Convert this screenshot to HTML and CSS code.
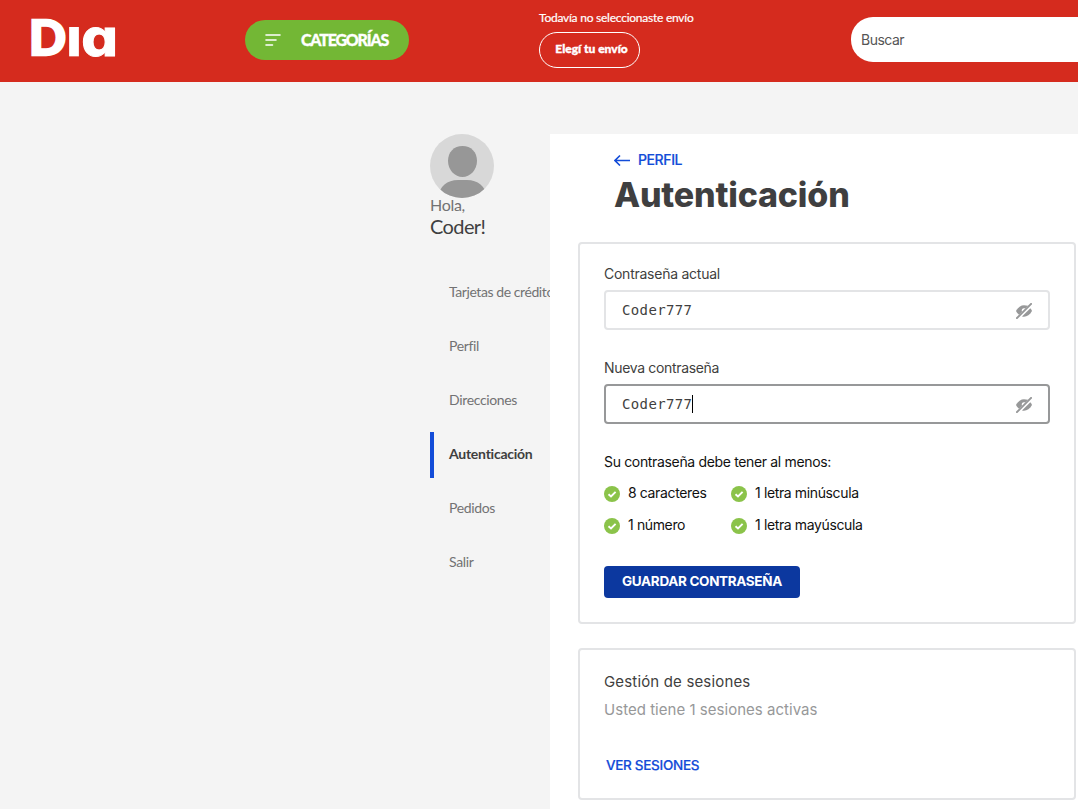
FILE: index.html
```html
<!DOCTYPE html>
<html lang="es">
<head>
<meta charset="utf-8">
<title>Autenticación - Dia</title>
<link rel="stylesheet" href="styles.css">
</head>
<body>
<header class="header">
  <svg class="logo" width="84" height="40" viewBox="0 0 84 40" role="img" aria-label="Dia">
    <text class="logo-text logo-d" font-size="47" x="-3" y="36" textLength="37" lengthAdjust="spacingAndGlyphs">D</text>
    <text class="logo-text logo-i" font-size="53" x="32.500" y="37" textLength="19" lengthAdjust="spacingAndGlyphs">ı</text>
    <text class="logo-text logo-a" font-size="52" x="49" y="36.500" textLength="38" lengthAdjust="spacingAndGlyphs">ɑ</text>
  </svg>
  <button class="categories">
    <svg width="17" height="14" viewBox="0 0 17 14" fill="none" stroke="#fff" stroke-width="1.6" stroke-linecap="round"><path d="M2 2H16M2 7H12M2 12H8.500"/></svg>
    <span class="cat-label">CATEGORÍAS</span>
  </button>
  <div class="shipping">
    <span class="ship-note">Todavía no seleccionaste envío</span>
    <button class="ship-button">Elegí tu envío</button>
  </div>
  <div class="search">Buscar</div>
</header>
<main class="page">
  <aside class="sidebar">
    <svg class="avatar" width="64" height="64" viewBox="0 0 64 64"><defs><clipPath id="c"><circle cx="32" cy="32" r="32"/></clipPath></defs><g clip-path="url(#c)"><path fill="#d8d8d8" d="M0 0h64v64H0z"/><g fill="#979797"><path d="M32.500 12C41 12 47 18 47 27S40 43 32.500 43 18 36 18 27 24 12 32.500 12Z"/><path d="M7 64C10 52 17 46 28 46H37C48 46 55 52 58 64Z"/></g></g></svg>
    <div class="hello">Hola,</div>
    <div class="name">Coder!</div>
    <nav class="menu">
      <a class="item item-cards">Tarjetas de crédito</a>
      <a class="item">Perfil</a>
      <a class="item">Direcciones</a>
      <a class="item active">Autenticación</a>
      <a class="item">Pedidos</a>
      <a class="item">Salir</a>
    </nav>
  </aside>
  <section class="content">
    <a class="back"><svg width="17" height="12" viewBox="0 0 17 12" fill="none" stroke="#134cd8" stroke-width="1.600"><path d="M1 6.500H16M6 1.500L1 6.500L6 11.500"/></svg><span class="back-label">PERFIL</span></a>
    <h1 class="title">Autenticación</h1>
    <div class="card password">
      <div class="label">Contraseña actual</div>
      <div class="field"><span class="value">Coder777</span><svg class="eye" width="16" height="16" viewBox="0 0 16 16"><g fill="#979899"><path d="M0 8C2 4 5 2.200 8 2.200Q10 2.200 12 2.800L9.200 5.600C7 4.500 5 6.500 6 8.800L3 11.800Q1 10 0 8Z"/><path d="M14.300 5.300Q15.500 6.500 16 8C14 12 11 13.700 8 13.700Q7 13.700 6 13.500Z"/></g><path d="M.9 15.100L15.100.9" stroke="#979899" stroke-width="2" stroke-linecap="round"/></svg></div>
      <div class="label second">Nueva contraseña</div>
      <div class="field focus"><span class="value">Coder777</span><i class="caret"></i><svg class="eye" width="16" height="16" viewBox="0 0 16 16"><g fill="#979899"><path d="M0 8C2 4 5 2.200 8 2.200Q10 2.200 12 2.800L9.200 5.600C7 4.500 5 6.500 6 8.800L3 11.800Q1 10 0 8Z"/><path d="M14.300 5.300Q15.500 6.500 16 8C14 12 11 13.700 8 13.700Q7 13.700 6 13.500Z"/></g><path d="M.9 15.100L15.100.9" stroke="#979899" stroke-width="2" stroke-linecap="round"/></svg></div>
      <div class="rules-title">Su contraseña debe tener al menos:</div>
      <div class="rules">
        <div class="rule"><svg class="check" width="16" height="16" viewBox="0 0 16 16"><circle cx="8" cy="8" r="8" fill="#8bc34a"/><path d="M4.500 8.200L7 10.500L11.600 5.800" fill="none" stroke="#fff" stroke-width="1.900"/></svg><span>8 caracteres</span></div>
        <div class="rule"><svg class="check" width="16" height="16" viewBox="0 0 16 16"><circle cx="8" cy="8" r="8" fill="#8bc34a"/><path d="M4.500 8.200L7 10.500L11.600 5.800" fill="none" stroke="#fff" stroke-width="1.900"/></svg><span>1 letra minúscula</span></div>
        <div class="rule"><svg class="check" width="16" height="16" viewBox="0 0 16 16"><circle cx="8" cy="8" r="8" fill="#8bc34a"/><path d="M4.500 8.200L7 10.500L11.600 5.800" fill="none" stroke="#fff" stroke-width="1.900"/></svg><span>1 número</span></div>
        <div class="rule"><svg class="check" width="16" height="16" viewBox="0 0 16 16"><circle cx="8" cy="8" r="8" fill="#8bc34a"/><path d="M4.500 8.200L7 10.500L11.600 5.800" fill="none" stroke="#fff" stroke-width="1.900"/></svg><span>1 letra mayúscula</span></div>
      </div>
      <button class="save">GUARDAR CONTRASEÑA</button>
    </div>
    <div class="card sessions">
      <div class="sessions-title">Gestión de sesiones</div>
      <div class="sessions-info">Usted tiene 1 sesiones activas</div>
      <a class="sessions-link">VER SESIONES</a>
    </div>
  </section>
</main>
</body>
</html>
```
FILE: styles.css
```css
* { box-sizing: border-box; }
body { margin: 0; height: 809px; overflow: hidden; background: #f4f4f4; color: #3f3f40; font-family: Inter, "Liberation Sans", sans-serif; font-size: 14px; white-space: nowrap; }
button { border: 0; padding: 0; font: inherit; color: #fff; white-space: nowrap; }
svg { flex: none; display: block; }
.header { height: 82px; background: #d52b1e; display: flex; align-items: flex-start; color: #fff; overflow: hidden; }
.logo { margin: 19px 0 0 32px; overflow: visible; }
.logo-text { font-family: "DejaVu Sans", sans-serif; font-weight: 700; fill: #fff; stroke: #fff; }
.logo-d { font-family: Lato, sans-serif; font-weight: 900; stroke-width: 2.4px; }
.logo-i { stroke-width: 0; }
.logo-a { stroke-width: 1px; }
.categories { margin: 20px 0 0 129px; width: 164px; height: 40px; border-radius: 20px; background: #73b735; display: flex; align-items: center; padding-left: 19px; gap: 20px; flex: none; font-family: Lato, sans-serif; font-weight: 900; font-size: 16px; letter-spacing: -1.2px; -webkit-text-stroke: .3px #fff; }
.cat-label { padding-bottom: 2px; }
.shipping { width: 312px; margin-left: 130px; padding-top: 10px; flex: none; font-family: Lato, sans-serif; }
.ship-note { display: block; height: 22px; line-height: 16px; font-size: 12px; letter-spacing: -.24px; -webkit-text-stroke: .2px #fff; }
.ship-button { display: block; width: 101px; height: 36px; border: 1px solid #fff; border-radius: 18px; background: transparent; font-size: 12px; font-weight: 900; padding: 0 3px 3px 7px; -webkit-text-stroke: .4px #fff; }
.search { flex: none; width: 260px; height: 45px; margin-top: 17px; border-radius: 22px 0 0 22px; background: #fff; color: #555; padding-left: 10px; line-height: 46px; font-size: 14px; letter-spacing: -.5px; }
.page { display: flex; padding: 52px 0 0 430px; }
.sidebar { width: 120px; overflow: hidden; flex: none; font-family: Lato, sans-serif; color: #727273; }
.hello { font-size: 16px; line-height: 14px; height: 18px; letter-spacing: -.3px; }
.name { font-size: 20px; line-height: 20px; height: 22px; color: #3f3f40; letter-spacing: -.6px; }
.menu { display: flex; flex-direction: column; gap: 8px; margin-top: 32px; }
.item { display: block; height: 46px; line-height: 44px; padding-left: 15px; border-left: 4px solid transparent; font-size: 14px; letter-spacing: -.35px; }
.item-cards { letter-spacing: -.42px; }
.active { color: #3f3f40; font-weight: 700; border-color: #134cd8; letter-spacing: -.25px; }
.content { width: 528px; height: 675px; background: #fff; padding: 16px 2px 0 28px; }
.back { height: 20px; margin-left: 36px; display: flex; align-items: center; gap: 8px; color: #134cd8; font-size: 14px; font-weight: 500; }
.back-label { padding-bottom: 2px; letter-spacing: -.4px; margin-left: -1px; -webkit-text-stroke: .2px; }
.title { margin: 0 0 0 36px; height: 72px; line-height: 50px; font-size: 34px; font-weight: 800; color: #3f3f40; letter-spacing: -.2px; }
.card { width: 498px; border: 2px solid #e3e4e6; border-radius: 4px; padding: 20px 24px 0; background: #fff; }
.password { height: 382px; }
.label { height: 26px; line-height: 20px; letter-spacing: -.25px; }
.second { margin-top: 28px; letter-spacing: -.33px; }
.field { width: 446px; height: 40px; border: 2px solid #e3e4e6; border-radius: 4px; display: flex; align-items: center; padding: 0 16px; }
.focus { border-color: #979899; }
.value { font: 14px "DejaVu Sans Mono", monospace; letter-spacing: .37px; }
.caret { width: 1px; height: 18px; background: #000; }
.eye { margin-left: auto; position: relative; top: 1px; }
.rules-title { margin-top: 28px; line-height: 20px; color: #111; letter-spacing: -.34px; }
.rules { display: grid; grid-template-columns: 127px 1fr; row-gap: 12px; margin-top: 11px; color: #111; letter-spacing: -.37px; }
.rule { height: 20px; line-height: 20px; display: flex; gap: 8px; }
.check { margin-top: 3px; }
.save { display: block; width: 196px; height: 32px; margin-top: 31px; padding-bottom: 2px; border-radius: 4px; background: #0c389f; font-weight: 700; font-size: 13.5px; letter-spacing: -.33px; }
.sessions { height: 152px; margin-top: 24px; }
.sessions-title { height: 28px; line-height: 24px; font-size: 15px; letter-spacing: .16px; }
.sessions-info { height: 28px; line-height: 24px; font-size: 15px; letter-spacing: .03px; color: #979899; }
.sessions-link { display: block; margin: 29px 0 0 2px; line-height: 20px; font-size: 13.5px; font-weight: 500; letter-spacing: -.3px; color: #134cd8; -webkit-text-stroke: .2px; }
```
